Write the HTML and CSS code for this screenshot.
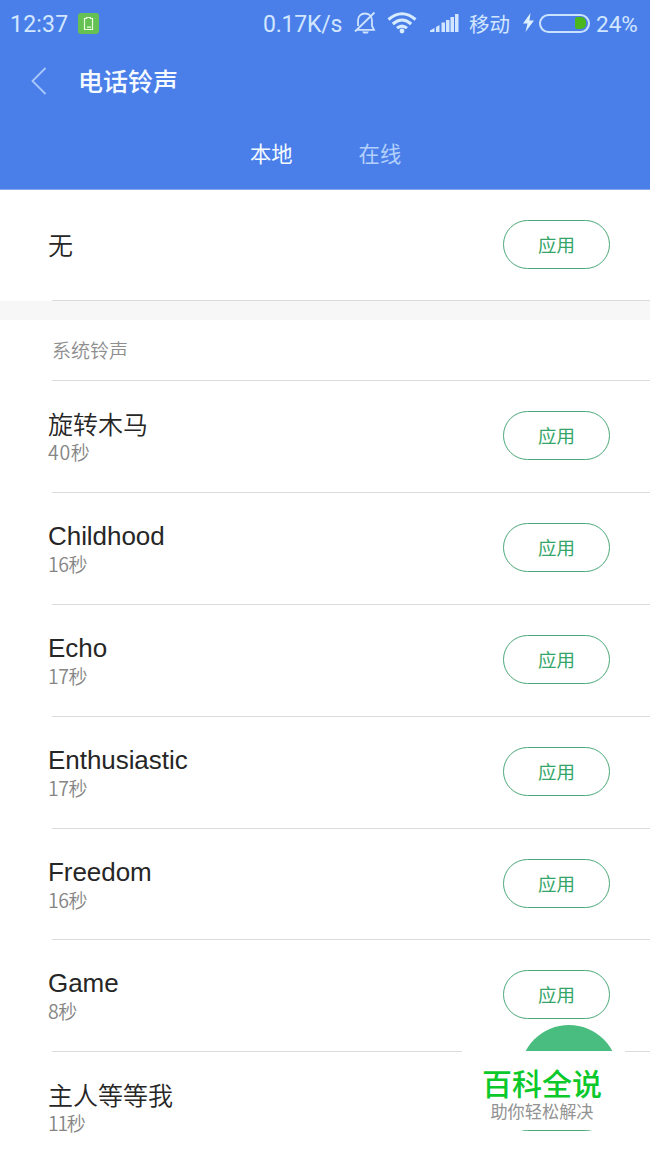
FILE: index.html
```html
<!DOCTYPE html>
<html lang="zh-CN">
<head>
<meta charset="utf-8">
<title>电话铃声</title>
<link rel="stylesheet" href="styles.css">
</head>
<body>
<div class="screen">
  <header class="header">
    <div class="status">
      <span class="clock">12:37</span>
      <svg class="app-badge" width="21" height="21" viewBox="0 0 21 21"><rect width="21" height="21" rx="3" fill="#65c153"/><path d="M6.5 5.5h2v-1h4v1h2v11h-8zM9 14.200h4" fill="none" stroke="#e9ffe0" stroke-width="1.200"/></svg>
      <span class="speed">0.17K/s</span>
      <svg class="bell" width="22" height="24" viewBox="0 0 22 24"><path d="M4 15V9.500C4 5 7 2.500 11 2.500S18 5 18 9.500V15l2 3.800H3M1 20.500L20.500 1.500" fill="none" stroke="#cfe3ff" stroke-width="1.800"/><path d="M8 20.500h7l-1.500 2h-4z" fill="#cfe3ff"/></svg>
      <svg class="wifi" width="30" height="22" viewBox="0 0 30 22"><g fill="none" stroke="#d8ecff" stroke-width="3"><path d="M1.500 7.500Q15-4 28.500 7.500"/><path d="M5.800 12Q15 4 24.200 12"/><path d="M10 16.200Q15 12 20 16.200"/></g><circle cx="15" cy="19" r="2.400" fill="#d8ecff"/></svg>
      <svg class="signal" width="29" height="20" viewBox="0 0 29 20"><path d="M0 19v-1.500l4.500-2.500v4zM6 19v-5l3.500-2v7zM11.500 19V9.500H15V19zM16 19V7h3.500v12zM20.500 19V4H24v15zM25 19V1h3.500v18z" fill="#d2e7ff"/></svg>
      <span class="carrier">移动</span>
      <svg class="bolt" width="11" height="20" viewBox="0 0 11 20"><path d="M7.500 0L0 10.500h4.500L2.500 19 11 7.500H6.500z" fill="#dceeff"/></svg>
      <span class="battery"><span class="charge"></span></span>
      <span class="percent">24%</span>
    </div>
    <div class="titlebar">
      <svg width="16" height="28" viewBox="0 0 16 28"><path d="M14.500 1L1.500 14l13 13" fill="none" stroke="#a9c9fb" stroke-width="1.800"/></svg>
      <h1 class="title">电话铃声</h1>
    </div>
    <nav class="tabs"><span class="tab active">本地</span><span class="tab">在线</span></nav>
  </header>
  <main>
    <div class="row none"><div class="name">无</div><span class="apply">应用</span></div>
    <div class="gap"></div>
    <h2 class="section">系统铃声</h2>
    <div class="row"><div><div class="name">旋转木马</div><div class="time"><span class="num wide">40</span>秒</div></div><span class="apply">应用</span></div>
    <div class="row"><div><div class="name latin">Childhood</div><div class="time"><span class="num">16</span>秒</div></div><span class="apply">应用</span></div>
    <div class="row"><div><div class="name latin">Echo</div><div class="time"><span class="num">17</span>秒</div></div><span class="apply">应用</span></div>
    <div class="row"><div><div class="name latin">Enthusiastic</div><div class="time"><span class="num">17</span>秒</div></div><span class="apply">应用</span></div>
    <div class="row"><div><div class="name latin">Freedom</div><div class="time"><span class="num">16</span>秒</div></div><span class="apply">应用</span></div>
    <div class="row"><div><div class="name latin">Game</div><div class="time"><span class="num">8</span>秒</div></div><span class="apply">应用</span></div>
    <div class="row"><div><div class="name">主人等等我</div><div class="time"><span class="num narrow">11</span>秒</div></div><span class="apply"></span></div>
  </main>
  <div class="fab"></div>
  <div class="watermark"><div class="brand">百科全说</div><div class="slogan">助你轻松解决</div></div>
</div>
</body>
</html>
```
FILE: styles.css
```css
* { box-sizing: border-box; }
body { margin: 0; background: #fff; font-family: "Noto Sans CJK SC", sans-serif; }
.screen { position: relative; width: 650px; height: 1155px; overflow: hidden; background: #fff; }
.header { height: 190px; background: #4a7fea; border-bottom: 1px solid #86a9ee; }
.status { display: flex; align-items: center; height: 46px; padding-left: 10px; color: #d2e6ff; font-size: 22px; line-height: 46px; white-space: nowrap; }
.clock { width: 68px; font-family: Roboto, sans-serif; font-size: 23px; letter-spacing: .2px; padding-top: 3px; }
.app-badge { margin-right: 164px; }
.speed { width: 91px; font-family: Roboto, sans-serif; font-size: 23px; letter-spacing: -.2px; padding-top: 3px; }
.bell { width: 22px; margin-right: 11px; }
.wifi { margin-right: 13px; }
.signal { width: 29px; margin-right: 10px; }
.carrier { width: 54px; font-size: 20.500px; }
.bolt { margin-right: 5px; }
.battery { display: flex; justify-content: flex-end; align-items: center; width: 51px; height: 19px; padding-right: 2px; border: 2px solid #cbe2ff; border-radius: 10px; }
.charge { width: 11px; height: 12px; border-radius: 2px 5px 5px 2px; background: #49b71d; }
.percent { margin-left: 6px; font-family: Roboto, sans-serif; font-size: 22.500px; padding-top: 1px; }
.titlebar { display: flex; align-items: center; height: 70px; padding-left: 31px; }
.title { margin: -2px 0 0 31px; color: #f4faff; font-size: 25px; font-weight: 500; line-height: 36px; }
.tabs { display: flex; gap: 66px; padding: 21px 0 0 250px; font-size: 21.300px; line-height: 32px; }
.tab { color: #b2d0fb; }
.tab.active { color: #f4fbff; }
.row { position: relative; display: flex; justify-content: space-between; align-items: flex-start; height: 111.900px; padding: 30px 40px 0 48px; }
.row::after { content: ""; position: absolute; left: 52px; right: 0; bottom: 0; height: 1px; background: #dcdcdc; }
.none { height: 111px; }
.none .name { padding-top: 12px; }
.name { height: 27px; margin-top: -1px; color: #262626; font-size: 25px; font-weight: 350; line-height: 26px; }
.latin { font-family: "Liberation Sans", sans-serif; font-size: 26px; line-height: 29px; letter-spacing: -.05px; }
.time { color: #858585; font-size: 19px; font-weight: 350; line-height: 29px; }
.num { font-size: 19.500px; letter-spacing: -.5px; }
.wide { letter-spacing: .7px; }
.narrow { letter-spacing: -1.300px; }
.apply { width: 107px; height: 49px; border: 1px solid #4aa878; border-radius: 25px; color: #35a567; font-size: 18.500px; line-height: 47px; text-align: center; }
.gap { height: 19px; background: #f7f7f7; }
.section { display: flex; align-items: center; position: relative; height: 61px; margin: 0; padding: 0 0 3px 52px; color: #8e8e8e; font-size: 19px; font-weight: 350; }
.section::after { content: ""; position: absolute; left: 52px; right: 0; bottom: 0; height: 1px; background: #dcdcdc; }
.fab { position: absolute; left: 520px; top: 1025px; width: 98px; height: 98px; border-radius: 50%; background: #49bd7f; }
.watermark { position: absolute; left: 462px; top: 1051px; width: 163px; height: 79px; padding-top: 13px; background: #fff; text-align: center; }
.brand { color: #0bc92b; font-size: 30px; font-weight: 500; line-height: 36px; margin-right: 3px; }
.slogan { color: #929292; font-size: 17.200px; line-height: 22px; margin-right: 3px; }
```
